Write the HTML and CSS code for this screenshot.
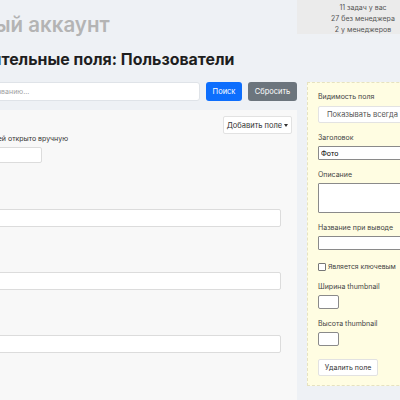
FILE: index.html
```html
<!DOCTYPE html>
<html lang="ru">
<head>
<meta charset="utf-8">
<title>Дополнительные поля: Пользователи</title>
<link rel="stylesheet" href="styles.css">
</head>
<body>
<div class="page">
  <header class="header">
    <div class="titles">
      <div class="account">Новый аккаунт</div>
      <h1 class="page-title">Дополнительные поля: Пользователи</h1>
    </div>
    <div class="stats">
      <div>11 задач у вас</div>
      <div>27 без менеджера</div>
      <div>2 у менеджеров</div>
    </div>
  </header>
  <div class="content">
    <div class="main-col">
      <form class="search">
        <input class="search-input" type="text" placeholder="Поиск по названию...">
        <button type="button" class="btn btn-primary">Поиск</button>
        <button type="button" class="btn btn-secondary">Сбросить</button>
      </form>
      <section class="panel">
        <div class="toolbar">
          <button type="button" class="btn btn-light">Добавить поле <span class="caret"></span></button>
        </div>
        <div class="form-top">
          <div class="label">Количество полей открыто вручную</div>
          <input class="input input-short" type="text">
        </div>
        <div class="fields">
          <div class="field">
            <div class="label">Имя</div>
            <input class="input input-wide" type="text">
          </div>
          <div class="field">
            <div class="label">Email</div>
            <input class="input input-wide" type="text">
          </div>
          <div class="field">
            <div class="label">Фото</div>
            <input class="input input-wide" type="text">
          </div>
        </div>
      </section>
    </div>
    <aside class="side">
      <div class="s-label">Видимость поля</div>
      <div class="select">Показывать всегда</div>
      <div class="s-label">Заголовок</div>
      <input class="s-input" type="text" value="Фото">
      <div class="s-label">Описание</div>
      <textarea class="s-textarea"></textarea>
      <div class="s-label">Название при выводе</div>
      <input class="s-input" type="text">
      <label class="check"><span class="box"></span>Является ключевым</label>
      <div class="s-label">Ширина thumbnail</div>
      <input class="s-small" type="text">
      <div class="s-label">Высота thumbnail</div>
      <input class="s-small" type="text">
      <button type="button" class="btn btn-light btn-del">Удалить поле</button>
    </aside>
  </div>
</div>
</body>
</html>
```
FILE: styles.css
```css
html, body {
  margin: 0;
  padding: 0;
}
body {
  background: #eef1f5;
  font-family: Inter, "Noto Sans", sans-serif;
  color: #222;
  overflow: hidden;
  width: 400px;
  height: 400px;
}
.page {
  margin-left: -93px;
  width: 522px;
}
.header {
  display: flex;
  height: 82px;
}
.titles {
  flex: 1;
}
.account {
  font-size: 20.5px;
  font-weight: 600;
  color: #b4b4b4;
  line-height: 26px;
  padding-top: 12px;
  margin-left: 48px;
}
.page-title {
  font-size: 15.9px;
  font-weight: 700;
  color: #1e1e1e;
  margin: 12px 0 0 22px;
  line-height: 20px;
}
.stats {
  width: 132px;
  height: 34px;
  box-sizing: border-box;
  background: #ebebeb;
  font-size: 7px;
  color: #555;
  text-align: center;
  line-height: 11px;
  padding-top: 2px;
}
.content {
  display: grid;
  grid-template-columns: 390px 1fr;
  column-gap: 10px;
}
.search {
  display: flex;
  gap: 6px;
  height: 19px;
  margin: 0 0 0 40px;
}
.search-input {
  flex: 1;
  border: 1px solid #dfe3e8;
  border-radius: 3px;
  background: #fff;
  font-family: inherit;
  font-size: 7px;
  padding: 0 8px;
  outline: none;
}
.search-input::placeholder {
  color: #a0a0a0;
}
.btn {
  font-family: inherit;
  font-size: 7.5px;
  border-radius: 3px;
  border: 1px solid transparent;
  padding: 0 8px;
  cursor: pointer;
}
.btn-primary {
  background: #0d6efd;
  color: #fff;
  width: 36px;
  padding: 0;
}
.btn-secondary {
  background: #6c757d;
  color: #fff;
  width: 49px;
  padding: 0;
}
.btn-light {
  background: #fff;
  border-color: #e2e2e2;
  color: #333;
  border-radius: 2px;
}
.panel {
  margin-top: 9px;
  background: #f8f8f8;
  height: 300px;
  padding: 6px 5px 0 0;
  box-sizing: border-box;
}
.toolbar {
  display: flex;
  justify-content: flex-end;
}
.toolbar .btn {
  height: 18px;
  width: 69px;
  padding: 0;
}
.caret {
  display: inline-block;
  width: 0;
  height: 0;
  border-left: 2.5px solid transparent;
  border-right: 2.5px solid transparent;
  border-top: 3px solid #333;
  vertical-align: 1px;
}
.form-top {
  padding-left: 36px;
}
.label {
  font-size: 7px;
  color: #333;
  line-height: 10px;
}
.input {
  display: block;
  background: #fff;
  border: 1px solid #dcdcdc;
  border-radius: 2px;
  box-sizing: border-box;
  outline: none;
}
.input-short {
  width: 99px;
  height: 16px;
  margin-top: 3px;
}
.fields {
  padding: 0 11px 0 10px;
  margin-top: 32px;
}
.field {
  margin-bottom: 31px;
}
.field .label {
  margin-bottom: 4px;
}
.input-wide {
  width: 100%;
  height: 18px;
}
.side {
  background: #fffde2;
  border: 1px dashed #e6e2c0;
  height: 304px;
  box-sizing: border-box;
  padding: 9px 0 0 10px;
}
.s-label {
  font-size: 7px;
  color: #444;
  line-height: 10px;
  margin-top: 10px;
}
.s-label:first-child {
  margin-top: 0;
}
.select {
  margin-top: 4px;
  width: 110px;
  height: 17px;
  background: #fff;
  border: 1px solid #e3e3e3;
  border-radius: 2px;
  box-sizing: border-box;
  font-size: 7.5px;
  color: #555;
  line-height: 15px;
  padding-left: 8px;
}
.s-input {
  display: block;
  width: 110px;
  height: 14px;
  margin-top: 3px;
  box-sizing: border-box;
  border: 1px solid #8a8a8a;
  border-radius: 1px;
  background: #fff;
  font-family: inherit;
  font-size: 7px;
  padding: 0 2px;
  outline: none;
}
.s-textarea {
  display: block;
  width: 110px;
  height: 30px;
  margin-top: 3px;
  box-sizing: border-box;
  border: 1px solid #8a8a8a;
  border-radius: 1px;
  background: #fff;
  resize: none;
  outline: none;
}
.check {
  display: flex;
  align-items: center;
  gap: 2px;
  font-size: 6.8px;
  color: #444;
  margin-top: 12px;
  line-height: 10px;
}
.box {
  width: 6px;
  height: 6px;
  border: 1px solid #777;
  border-radius: 1px;
  background: #fff;
}
.s-small {
  display: block;
  width: 21px;
  height: 14px;
  margin-top: 3px;
  box-sizing: border-box;
  border: 1px solid #8a8a8a;
  border-radius: 2px;
  background: #fff;
  outline: none;
}
.btn-del {
  display: block;
  margin-top: 13px;
  width: 60px;
  height: 17px;
  padding: 0;
  font-size: 7px;
}
```
